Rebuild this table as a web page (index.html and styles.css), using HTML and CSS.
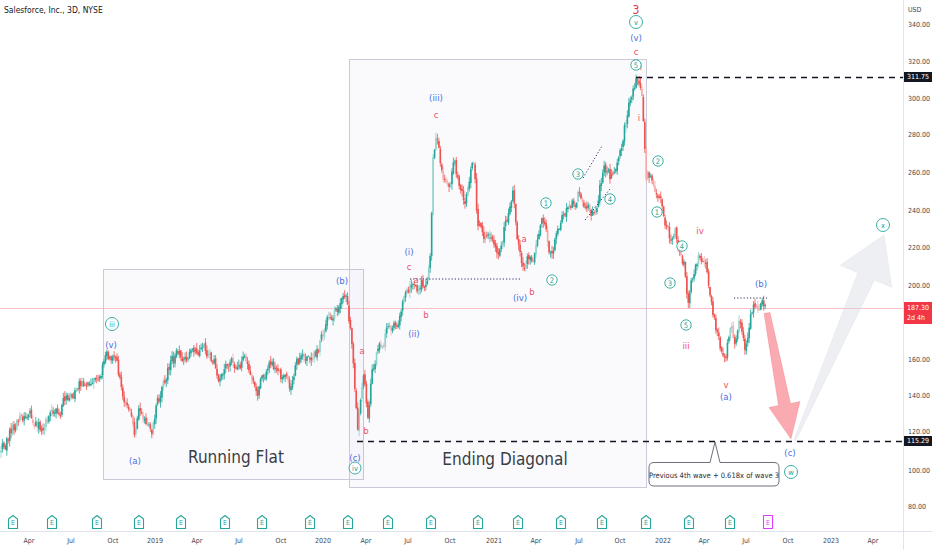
FILE: index.html
```html
<!DOCTYPE html>
<html>
<head>
<meta charset="utf-8">
<link rel="stylesheet" href="styles.css">
</head>
<body>
<div class="app">
  <div class="main">
    <div class="chart">
      <svg class="plot" width="903" height="531" viewBox="0 0 903 531">
        <!-- pattern boxes -->
        <rect class="box" x="103.5" y="269.5" width="260" height="210"/>
        <rect class="box" x="349.5" y="59.5" width="297" height="428"/>
        <text class="boxtxt" x="236" y="463">Running Flat</text>
        <text class="boxtxt" x="505" y="465">Ending Diagonal</text>

        <!-- current price line -->
        <line class="pline" x1="0" y1="308.5" x2="903" y2="308.5"/>

        <g id="candles"></g>

        <!-- dotted helpers -->
        <line class="dot" x1="410" y1="279" x2="522" y2="279"/>
        <line class="dot" x1="583" y1="178" x2="602" y2="146"/>
        <line class="dot" x1="585" y1="220" x2="610" y2="189"/>
        <line class="dot" x1="734" y1="298" x2="767" y2="298"/>

        <!-- dashed levels -->
        <line class="dash" x1="636" y1="77.5" x2="903" y2="77.5"/>
        <line class="dash" x1="357" y1="441.5" x2="903" y2="441.5"/>

        <!-- arrows -->
        <polygon class="arr-red" points="764,313.5 770,312.5 790.5,403.5 800,401.5 791,439 769,407.5 778.5,405.5"/>
        <polygon class="arr-grey" points="794,439.6 857.8,272.7 840.4,265.2 884,235 891.8,287.4 874.4,279.9 796,440.4"/>

        <!-- callout -->
        <path class="callout" d="M654,462.5 L710,462.5 L715,442 L720,462.5 L774,462.5 Q779,462.5 779,467.5 L779,481 Q779,486 774,486 L654,486 Q649,486 649,481 L649,467.5 Q649,462.5 654,462.5 Z"/>
        <text class="calltxt" x="714" y="475">Previous 4th wave + 0.618x of wave 3</text>

        <!-- wave labels: red -->
        <text class="lr big" x="636" y="10">3</text>
        <text class="lr" x="636" y="51">c</text>
        <text class="lr" x="362" y="350">a</text>
        <text class="lr" x="366" y="430">b</text>
        <text class="lr" x="409" y="266">c</text>
        <text class="lr" x="416" y="279">a</text>
        <text class="lr" x="426" y="314">b</text>
        <text class="lr" x="436" y="114">c</text>
        <text class="lr" x="524" y="238">a</text>
        <text class="lr" x="532" y="291">b</text>
        <text class="lr" x="641" y="66">i</text>
        <text class="lr" x="639" y="117">i</text>
        <text class="lr" x="686" y="345">iii</text>
        <text class="lr" x="700" y="230">iv</text>
        <text class="lr" x="726" y="384">v</text>

        <!-- wave labels: blue -->
        <text class="lb" x="111" y="344">(v)</text>
        <text class="lb" x="135" y="460">(a)</text>
        <text class="lb" x="342" y="280">(b)</text>
        <text class="lb" x="355" y="457">(c)</text>
        <text class="lb" x="409" y="251">(i)</text>
        <text class="lb" x="414" y="333">(ii)</text>
        <text class="lb" x="436" y="97">(iii)</text>
        <text class="lb" x="520" y="297">(iv)</text>
        <text class="lb" x="636" y="37">(v)</text>
        <text class="lb" x="726" y="396">(a)</text>
        <text class="lb" x="761" y="283">(b)</text>
        <text class="lb" x="790" y="452">(c)</text>

        <!-- wave labels: green circled -->
        <g class="cg">
          <circle cx="112" cy="324" r="6.5"/><text x="112" y="324.5">iii</text>
          <circle cx="355" cy="468" r="6"/><text x="355" y="468.5">iv</text>
          <circle cx="546" cy="203" r="5.2"/><text x="546" y="203.5">1</text>
          <circle cx="552" cy="280" r="5.2"/><text x="552" y="280.5">2</text>
          <circle cx="578" cy="174" r="5.2"/><text x="578" y="174.5">3</text>
          <circle cx="610" cy="199" r="5.2"/><text x="610" y="199.5">4</text>
          <circle cx="636" cy="22" r="6.5"/><text x="636" y="22.5">v</text>
          <circle cx="636" cy="65" r="5.2"/><text x="636" y="65.5">5</text>
          <circle cx="658" cy="161" r="5.2"/><text x="658" y="161.5">2</text>
          <circle cx="657" cy="212" r="5.2"/><text x="657" y="212.5">1</text>
          <circle cx="682" cy="246" r="5.2"/><text x="682" y="246.5">4</text>
          <circle cx="670" cy="283" r="5.2"/><text x="670" y="283.5">3</text>
          <circle cx="686" cy="325" r="5.2"/><text x="686" y="325.5">5</text>
          <circle cx="791" cy="472" r="6.5"/><text x="791" y="472.5">w</text>
          <circle cx="883" cy="225" r="6.5"/><text x="883" y="225.5">x</text>
        </g>

        <!-- earnings markers -->
        <g id="earn"></g>
      </svg>
      <div class="title">Salesforce, Inc., 3D, NYSE</div>
    </div>
    <div class="axis">
      <div class="cur">USD</div>
      <div class="pl" style="top:20px">340.00</div>
      <div class="pl" style="top:57px">320.00</div>
      <div class="pl" style="top:94px">300.00</div>
      <div class="pl" style="top:130px">280.00</div>
      <div class="pl" style="top:168px">260.00</div>
      <div class="pl" style="top:206px">240.00</div>
      <div class="pl" style="top:243px">220.00</div>
      <div class="pl" style="top:281px">200.00</div>
      <div class="pl" style="top:355px">160.00</div>
      <div class="pl" style="top:391px">140.00</div>
      <div class="pl" style="top:427px">120.00</div>
      <div class="pl" style="top:466px">100.00</div>
      <div class="pl" style="top:502px">80.00</div>
      <div class="tag dark" style="top:72px">311.75</div>
      <div class="tag dark" style="top:436px">115.29</div>
      <div class="tag red" style="top:302px">187.30<br>2d 4h</div>
    </div>
  </div>
  <div class="timebar">
    <div class="times">
      <span class="tk" style="left:29px">Apr</span>
      <span class="tk" style="left:71px">Jul</span>
      <span class="tk" style="left:113px">Oct</span>
      <span class="tk" style="left:155px">2019</span>
      <span class="tk" style="left:197px">Apr</span>
      <span class="tk" style="left:239px">Jul</span>
      <span class="tk" style="left:281px">Oct</span>
      <span class="tk" style="left:323px">2020</span>
      <span class="tk" style="left:366px">Apr</span>
      <span class="tk" style="left:408px">Jul</span>
      <span class="tk" style="left:450px">Oct</span>
      <span class="tk" style="left:494px">2021</span>
      <span class="tk" style="left:536px">Apr</span>
      <span class="tk" style="left:579px">Jul</span>
      <span class="tk" style="left:620px">Oct</span>
      <span class="tk" style="left:663px">2022</span>
      <span class="tk" style="left:704px">Apr</span>
      <span class="tk" style="left:746px">Jul</span>
      <span class="tk" style="left:788px">Oct</span>
      <span class="tk" style="left:831px">2023</span>
      <span class="tk" style="left:873px">Apr</span>
    </div>
    <div class="corner"></div>
  </div>
</div>
<script src="chart.js"></script>
</body>
</html>
```

FILE: styles.css
```css
html, body {
  margin: 0;
  padding: 0;
  background: #ffffff;
}
body {
  font-family: "Liberation Sans Narrow", "DejaVu Sans Condensed", "Liberation Sans", sans-serif;
  color: #131722;
}
.app {
  width: 932px;
  height: 550px;
  display: flex;
  flex-direction: column;
  overflow: hidden;
}
.main {
  display: flex;
  height: 531px;
  border-bottom: 1px solid #e0e3eb;
}
.chart {
  position: relative;
  width: 903px;
  height: 531px;
}
.plot {
  display: block;
}
.title {
  position: absolute;
  left: 4px;
  top: 5px;
  font-size: 8.5px;
  color: #131722;
}
.axis {
  position: relative;
  flex: 1;
  border-left: 1px solid #e0e3eb;
  font-size: 7px;
  color: #434651;
}
.cur {
  position: absolute;
  left: 4px;
  top: 5px;
  line-height: 10px;
}
.pl {
  position: absolute;
  left: 4px;
  line-height: 10px;
}
.tag {
  position: absolute;
  left: 0;
  width: 28px;
  padding-left: 3px;
  box-sizing: border-box;
  line-height: 10px;
  color: #ffffff;
}
.tag.dark {
  background: #131722;
}
.tag.red {
  background: #f23645;
  padding-top: 1px;
  padding-bottom: 1px;
}
.timebar {
  display: flex;
  height: 18px;
}
.times {
  position: relative;
  width: 903px;
  height: 18px;
  font-size: 7px;
  color: #434651;
}
.tk {
  position: absolute;
  top: 4px;
  transform: translateX(-50%);
  line-height: 10px;
}
.corner {
  flex: 1;
  border-left: 1px solid #e0e3eb;
}

/* svg pieces */
.box {
  fill: rgba(120, 123, 200, 0.035);
  stroke: #c9cbd8;
  stroke-width: 1;
}
.boxtxt {
  font-size: 17px;
  fill: #3b3d45;
  text-anchor: middle;
}
.pline {
  stroke: #f7b3ba;
  stroke-width: 0.8;
}
.dot {
  stroke: #2c3169;
  stroke-width: 1;
  stroke-dasharray: 1.2 2;
}
.dash {
  stroke: #131722;
  stroke-width: 1.3;
  stroke-dasharray: 6 5;
}
.arr-red {
  fill: rgba(242, 54, 69, 0.42);
  stroke: rgba(242, 54, 69, 0.25);
  stroke-width: 0.8;
}
.arr-grey {
  fill: rgba(205, 208, 216, 0.34);
  stroke: rgba(205, 208, 216, 0.3);
  stroke-width: 0.8;
}
.callout {
  fill: #ffffff;
  stroke: #5d606b;
  stroke-width: 0.9;
}
.calltxt {
  font-size: 7.5px;
  fill: #2a2e39;
  text-anchor: middle;
  dominant-baseline: central;
}
.lr, .lb {
  font-size: 9.5px;
  text-anchor: middle;
  dominant-baseline: central;
}
.lr {
  fill: #ef4f68;
}
.lr.big {
  font-size: 12px;
  fill: #e8344e;
}
.lb {
  fill: #4a6fe3;
}
.cg circle {
  fill: #ffffff;
  stroke: #26a69a;
  stroke-width: 0.9;
}
.cg text {
  font-size: 7.5px;
  fill: #26a69a;
  text-anchor: middle;
  dominant-baseline: central;
}
.earn path {
  fill: #ffffff;
  stroke: #26a69a;
  stroke-width: 1.1;
}
.earn text {
  font-size: 7px;
  fill: #26a69a;
  text-anchor: middle;
  dominant-baseline: central;
}
.earn.next path {
  stroke: #e040fb;
}
.earn.next text {
  fill: #e040fb;
}
.c-up { fill: #26a69a; stroke: #26a69a; }
.c-dn { fill: #ef5350; stroke: #ef5350; }
.c-up-f { fill: #8fd3cb; stroke: #8fd3cb; }
.c-dn-f { fill: #f6a9a8; stroke: #f6a9a8; }
.wick { stroke-width: 0.8; fill: none; }
.body { stroke: none; }
```

FILE: chart.js
```js
(function () {
  var W = [[0,458],[5,445],[10,430],[20,420],[30,418],[40,428],[50,415],[60,407],[70,395],[80,385],[90,380],[100,370],[105,362],[111,356],[117,365],[122,395],[128,400],[132,420],[135,442],[140,410],[147,425],[152,430],[157,405],[162,390],[170,365],[180,353],[190,355],[197,357],[205,350],[215,365],[222,380],[228,365],[240,362],[247,365],[252,385],[258,397],[263,375],[270,368],[280,375],[286,382],[290,390],[296,360],[305,353],[318,352],[324,330],[330,318],[338,305],[345,293],[348,310],[352,340],[356,400],[358,430],[361,395],[364,380],[368,418],[372,370],[378,350],[385,335],[392,325],[398,318],[404,300],[410,288],[416,295],[422,285],[428,275],[431,240],[433,150],[437,136],[440,160],[446,190],[450,180],[455,160],[460,195],[465,205],[470,175],[474,165],[478,230],[485,238],[492,240],[498,250],[505,225],[510,210],[513,195],[518,240],[522,262],[527,258],[533,262],[538,235],[542,220],[546,222],[550,250],[553,258],[558,225],[565,212],[572,205],[580,192],[586,210],[592,212],[598,200],[604,165],[610,180],[616,165],[622,140],[628,110],[633,85],[636,80],[640,85],[643,110],[646,180],[650,175],[655,195],[660,195],[665,225],[670,235],[675,228],[680,250],[684,262],[688,302],[692,280],[696,262],[700,252],[705,260],[710,295],[715,320],[720,350],[725,364],[728,340],[731,315],[735,345],[740,320],[745,350],[750,315],[756,305],[761,300],[766,305]];

  var seed = 12345;
  function rnd() { seed = (seed * 16807) % 2147483647; return seed / 2147483647; }
  function interp(x) {
    for (var i = 1; i < W.length; i++) {
      if (x <= W[i][0]) {
        var a = W[i - 1], b = W[i];
        var t = (x - a[0]) / (b[0] - a[0]);
        return a[1] + (b[1] - a[1]) * t;
      }
    }
    return W[W.length - 1][1];
  }

  var paths = { 'c-up': ['', ''], 'c-dn': ['', ''], 'c-up-f': ['', ''], 'c-dn-f': ['', ''] };
  var n = 0, prev = null, step = 1.45;
  for (var x = 1; x <= 766.5; x += step) {
    var t = interp(x);
    n = 0.5 * n + (rnd() - 0.5) * 12;
    var c = t + n;
    var o = prev === null ? c + 2 : prev + (rnd() - 0.5) * 3;
    var hi = Math.min(o, c) - rnd() * 5 - 0.6;
    var lo = Math.max(o, c) + rnd() * 5 + 0.6;
    var up = c < o;
    var faded = rnd() < 0.2;
    var cls = (up ? 'c-up' : 'c-dn') + (faded ? '-f' : '');
    var top = Math.min(o, c), h = Math.max(Math.abs(o - c), 0.9);
    var cx = x.toFixed(2);
    paths[cls][0] += 'M' + cx + ',' + hi.toFixed(1) + 'V' + lo.toFixed(1);
    paths[cls][1] += 'M' + (x - 0.8).toFixed(2) + ',' + top.toFixed(1) + 'h1.6v' + h.toFixed(1) + 'h-1.6z';
    prev = c;
  }
  var out = '';
  ['c-up-f', 'c-dn-f', 'c-up', 'c-dn'].forEach(function (k) {
    out += '<path class="wick ' + k + '" d="' + paths[k][0] + '"/>';
    out += '<path class="body ' + k + '" d="' + paths[k][1] + '"/>';
  });
  document.getElementById('candles').innerHTML = out;

  var E = [13, 52, 97, 139, 181, 225, 262, 310, 348, 388, 431, 478, 518, 561, 602, 646, 689, 730, 768];
  var eo = '';
  E.forEach(function (ex, i) {
    var y = 522;
    var cls = i === E.length - 1 ? 'earn next' : 'earn';
    var d = i === E.length - 1
      ? 'M' + (ex - 4.5) + ',' + (y - 6.5) + 'h9v13h-9z'
      : 'M' + (ex - 4.5) + ',' + (y + 6.5) + 'V' + (y - 3) + 'L' + ex + ',' + (y - 6.5) + 'L' + (ex + 4.5) + ',' + (y - 3) + 'V' + (y + 6.5) + 'Z';
    eo += '<g class="' + cls + '"><path d="' + d + '"/><text x="' + ex + '" y="' + (y + 1) + '">E</text></g>';
  });
  document.getElementById('earn').innerHTML = eo;
})();
```
